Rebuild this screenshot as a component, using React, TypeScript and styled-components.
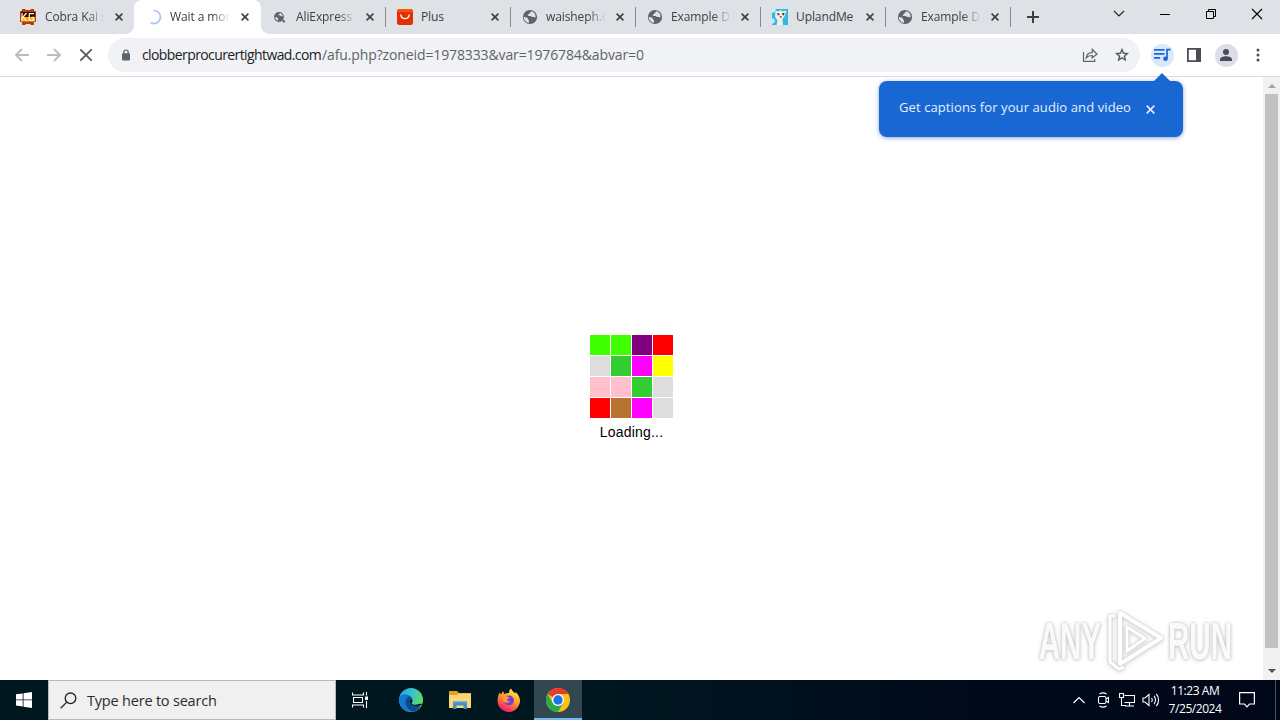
import type { ReactNode } from "react";
import styled, { createGlobalStyle, css } from "styled-components";

const GlobeIcon = () => (
  <svg width="16" height="16" viewBox="0 0 16 16">
    <circle cx="8" cy="8" r="7.1" fill="#5f6368" />
    <path d="M1.800 7.600c.8.900 2.300.6 3.400 1.200.9.500.5 1.300 1.200 1.900.8.700.7 1.700.4 3.300C4 13.500 1.600 11 1.800 7.600z" fill="#dee1e6" />
    <path d="M9.300 2.300c-.2 1-.9 1.200-1.600 1.500-.6.400 0 1.200-.8 1.500-1 .2-1.400.7-.9 1.400.7.500 2.300-.2 3 .6.500.7 1.300 1 2.300.7.900-.2 1.500.1 2.300.6C14 5.500 12.200 2.900 9.300 2.300z" fill="#dee1e6" />
  </svg>
);

const SmallGlobeIcon = () => (
  <svg width="16" height="16" viewBox="0 0 16 16">
    <circle cx="7" cy="8" r="4.900" fill="#5f6368" />
    <path d="M3.200 8c1.200.2 2 .3 2.500 1 .3.700.8 1.300.4 2.500C4.500 11.300 3 10 3.200 8zM8 4.300c-.5.800-1.500.9-1.700 1.600.5.700 1.900 0 2.400 1 .7.300 1.400.1 2 .3C10.600 5.800 9.500 4.500 8 4.300z" fill="#dee1e6" />
    <circle cx="11.800" cy="12.300" r="1.200" fill="#5f6368" />
  </svg>
);

const CobraIcon = () => (
  <svg width="16" height="16" viewBox="0 0 16 16">
    <path d="M2 0h3l1 1h4l1-1h3v2h2v11h-2v3h-3l-1-1H6l-1 1H2v-3H0V2h2z" fill="#b83a10" />
    <path d="M1 8h14v4.500H1z" fill="#f6a81c" />
    <path d="M1 3h14v5H1z" fill="#2b0604" />
    <path d="M2 4v8M6.500 4 3 8l3.700 4M14 4.700H9.300v6.600h4.200V8.500h-2" fill="none" stroke="#fff4b0" strokeWidth="1.300" />
  </svg>
);

const AliIcon = () => (
  <svg width="16" height="16" viewBox="0 0 16 16">
    <rect width="16" height="16" rx="2.500" fill="#e62e04" />
    <path d="M0 3V2.500A2.500 2.500 0 0 1 2.500 0h11A2.500 2.500 0 0 1 16 2.500V3z" fill="#f0550a" />
    <path d="M3.800 5.800c.8 5 7.600 5 8.400 0" fill="none" stroke="#fff" strokeWidth="1.300" strokeLinecap="round" />
  </svg>
);

const UplandIcon = () => (
  <svg width="16" height="16" viewBox="0 0 16 16">
    <rect width="16" height="16" fill="#35b5e8" />
    <path d="M3.500 1.500l3 1 2-1.500 2 1.500 4-1-2 6-2 2.500.5 6H4.500l1-4.500-2.500-4z" fill="#f2efe8" />
    <path d="M5 4l2.500.5V6L6 6.500zM10 4h2.500l-.5 2.500-1.500-.5z" fill="#4a3a30" />
    <path d="M7.500 7h2.500L9 9.500z" fill="#8c5a3a" />
    <path d="M0 0h4l-1 3-3 1zM0 10l2-1 1 4-3 2z" fill="#c6ecf7" />
  </svg>
);

const SpinnerIcon = () => (
  <svg width="16" height="16" viewBox="0 0 16 16">
    <path d="M7.500 1.500a6.500 6.500 0 1 1-3 12" fill="none" stroke="#a9c4f5" strokeWidth="1.700" />
  </svg>
);

const CloseIcon = ({ color = "#3c4043", size = 8, stroke = 1.6 }) => (
  <svg width={size} height={size} viewBox="0 0 8 8">
    <path d="M.6.6l6.800 6.800M7.400.6L.6 7.400" stroke={color} strokeWidth={stroke} />
  </svg>
);

type TabType = {
  title: string;
  icon: ReactNode;
  active?: boolean;
  separator?: boolean;
  fade?: boolean;
};

const tabs: TabType[] = [
  { title: "Cobra Kai s", icon: <CobraIcon />, fade: true },
  { title: "Wait a mor", icon: <SpinnerIcon />, active: true, fade: true },
  { title: "AliExpress", icon: <SmallGlobeIcon />, separator: true, fade: true },
  { title: "Plus", icon: <AliIcon />, separator: true },
  { title: "waisheph.c", icon: <GlobeIcon />, separator: true, fade: true },
  { title: "Example D", icon: <GlobeIcon />, separator: true, fade: true },
  { title: "UplandMe", icon: <UplandIcon />, separator: true },
  { title: "Example D", icon: <GlobeIcon />, separator: true, fade: true },
];

const blocks = [
  "#40ff00", "#40ff00", "#800080", "#ff0000",
  "#dddddd", "#32cd32", "#ff00ff", "#ffff00",
  "#ffc0cb", "#ffc0cb", "#32cd32", "#dddddd",
  "#ff0000", "#b87333", "#ff00ff", "#dddddd",
];

const TabStrip = () => (
  <Strip>
    {tabs.map((tab, index) => (
      <Tab key={index} $active={tab.active} $separator={tab.separator}>
        <Favicon>{tab.icon}</Favicon>
        <TabTitle $fade={tab.fade}>{tab.title}</TabTitle>
        <CloseIcon />
      </Tab>
    ))}
    <NewTab>
      <svg width="12" height="12" viewBox="0 0 12 12">
        <path d="M6 0v12M0 6h12" stroke="#3c4043" strokeWidth="2" />
      </svg>
    </NewTab>
    <WindowButtons>
      <svg width="12" height="8" viewBox="0 0 12 8">
        <path d="M1 1l5 5 5-5" fill="none" stroke="#222" strokeWidth="1.200" />
      </svg>
      <svg width="12" height="12" viewBox="0 0 12 12">
        <path d="M1 6.500h10" stroke="#000" />
      </svg>
      <svg width="12" height="12" viewBox="0 0 12 12">
        <path d="M1.500 3.500h7v7h-7zM3.500 3.500v-2h7v7h-2" fill="none" stroke="#000" />
      </svg>
      <svg width="12" height="12" viewBox="0 0 12 12">
        <path d="M1 1l10 10M11 1L1 11" stroke="#000" strokeWidth="1.100" />
      </svg>
    </WindowButtons>
  </Strip>
);

const Toolbar = () => (
  <Bar>
    <NavButtons>
      <svg width="16" height="16" viewBox="0 0 16 16" fill="none" stroke="#b9bbbe" strokeWidth="1.800">
        <path d="M15 8H2.500M8 2L2 8l6 6" />
      </svg>
      <svg width="16" height="16" viewBox="0 0 16 16" fill="none" stroke="#b9bbbe" strokeWidth="1.800">
        <path d="M1 8h12.500M8 2l6 6-6 6" />
      </svg>
      <svg width="16" height="16" viewBox="0 0 16 16" fill="none" stroke="#55585c" strokeWidth="1.800">
        <path d="M2.300 2.300l11.400 11.400M13.700 2.300L2.300 13.700" />
      </svg>
    </NavButtons>
    <Omnibox>
      <svg width="10" height="12" viewBox="0 0 10 12">
        <rect x="1" y="4.300" width="8" height="7.200" rx="1" fill="#5f6368" />
        <path d="M2.800 5V3.200a2.200 2.200 0 0 1 4.400 0V5" fill="none" stroke="#5f6368" strokeWidth="1.200" />
      </svg>
      <Url>
        <Domain>clobberprocurertightwad.com</Domain>
        <Path>/afu.php?zoneid=1978333&amp;var=1976784&amp;abvar=0</Path>
      </Url>
      <svg width="16" height="16" viewBox="0 0 16 16" fill="none" stroke="#5f6368" strokeWidth="1.200">
        <path d="M1.500 5v9.400h11.300V12" />
        <path d="M4.200 11c.3-3.500 2.500-5.300 6-5.400V2.500L15 7l-4.800 4V8.500c-2.600 0-4.500.6-6 2.500z" />
      </svg>
      <svg width="16" height="16" viewBox="0 0 24 24">
        <path
          d="M22 9.240l-7.190-.62L12 2 9.190 8.630 2 9.240l5.460 4.730L5.820 21 12 17.270 18.180 21l-1.630-7.030L22 9.240zM12 15.400l-3.760 2.270 1-4.280-3.320-2.880 4.380-.38L12 6.100l1.710 4.040 4.380.38-3.320 2.880 1 4.280L12 15.400z"
          fill="#4a4d51"
          stroke="#4a4d51"
          strokeWidth=".4"
        />
      </svg>
    </Omnibox>
    <Actions>
      <RoundButton $color="#d9e8fc">
        <svg width="18" height="18" viewBox="0 0 18 18" fill="none" stroke="#1967d2" strokeWidth="1.700">
          <path d="M1 3.800h10.500M1 7.800h10.500M1 11.800h6M14 13V3.600h3.500" />
          <circle cx="12.500" cy="12.800" r="2.300" fill="#1967d2" stroke="none" />
        </svg>
      </RoundButton>
      <svg width="14" height="14" viewBox="0 0 14 14">
        <path d="M.9.900h12.200v12.200H.9z" fill="none" stroke="#4a4d51" strokeWidth="1.800" />
        <path d="M9 1h4v12H9z" fill="#4a4d51" />
      </svg>
      <RoundButton $color="#dcdde6">
        <svg width="14" height="14" viewBox="0 0 14 14" fill="#484b58">
          <circle cx="7" cy="4" r="3" />
          <path d="M1 13v-1.500C1 9.300 4.500 8.300 7 8.300s6 1 6 3.200V13z" />
        </svg>
      </RoundButton>
      <svg width="4" height="14" viewBox="0 0 4 14" fill="#4a4d51">
        <circle cx="2" cy="2" r="1.500" />
        <circle cx="2" cy="7" r="1.500" />
        <circle cx="2" cy="12" r="1.500" />
      </svg>
    </Actions>
    <Bubble>
      <BubbleText>Get captions for your audio and video</BubbleText>
      <CloseIcon color="#e8f0fe" size={9} stroke={1.4} />
    </Bubble>
  </Bar>
);

const Watermark = () => (
  <Mark>
    <MarkText>ANY</MarkText>
    <MarkLogo width="58" height="64" viewBox="0 0 58 64" fill="none" stroke="#fff" strokeLinejoin="round">
      <path d="M9 7H4v46l9 7 5-2" strokeWidth="3" />
      <path d="M14 4l41 25-41 26V4z" strokeWidth="4" />
      <path d="M21 18v24l18-12.500z" strokeWidth="3" />
    </MarkLogo>
    <MarkText>RUN</MarkText>
  </Mark>
);

const Taskbar = () => (
  <TaskbarLayout>
    <TaskButton>
      <svg width="16" height="16" viewBox="0 0 16 16" fill="#fff">
        <path d="M0 2.300l6.700-.9v6.100H0zM7.500 1.300L16 0v7.500H7.500zM0 8.300h6.700v6.200L0 13.600zM7.500 8.300H16V16l-8.500-1.300z" />
      </svg>
    </TaskButton>
    <SearchBox>
      <svg width="17" height="17" viewBox="0 0 17 17" fill="none" stroke="#222" strokeWidth="1.300">
        <circle cx="10.500" cy="6.300" r="5.300" />
        <path d="M6.700 10.100L.7 16.200" />
      </svg>
      <span>Type here to search</span>
    </SearchBox>
    <TaskButton>
      <svg width="17" height="16" viewBox="0 0 17 16" fill="none" stroke="#fff" strokeWidth="1.100">
        <path d="M.5.500v2.500h11V.500M.5 15.500V13h11v2.500M1.500 5.500h9v5h-9zM14.500 0v3.500M14.500 9v7" />
        <path d="M13 4.500h3V8h-3z" fill="#fff" stroke="none" />
      </svg>
    </TaskButton>
    <Apps>
      <TaskButton>
        <svg width="24" height="24" viewBox="0 0 24 24">
          <defs>
            <linearGradient id="edgeTop" x1="0" y1="0" x2="1" y2=".4">
              <stop offset="0" stopColor="#289fe0" />
              <stop offset=".5" stopColor="#35bfd6" />
              <stop offset="1" stopColor="#5fdb63" />
            </linearGradient>
          </defs>
          <circle cx="12" cy="12" r="12" fill="url(#edgeTop)" />
          <path d="M.1 10.500C1.500 6.500 6 5.500 9.500 7c3 1.200 4 3 4 5.300-2-1.700-3.300.200-2.500 2.300 1.200 3 6 4.400 10.800 2.500C19.500 21.500 16 24 12 24 5 24-.3 18 .1 10.500z" fill="#1478d0" />
          <path d="M9.500 8.500C6 10.500 5.500 16 8 19c1.800 2.600 4.300 4.400 6.500 4.800 3-.7 5.800-2.700 7.300-6.700-4.800 1.900-9.600.500-10.800-2.500-.8-2.100.5-4 2.500-2.300 0-1.800-1.600-3.300-4-3.800z" fill="#114a8b" />
          <path d="M13.500 12.300c.3 1-.8 1.800-.8 2.700 0 1.800 4.300 2.700 7.800.7l4 .3-2.700 1.100c-4.800 1.900-9.600.5-10.800-2.500-.8-2.100.5-4 2.500-2.300z" fill="#001721" />
        </svg>
      </TaskButton>
      <TaskButton>
        <svg width="22" height="18" viewBox="0 0 22 18">
          <path d="M0 0h8l2 2h12v15H0z" fill="#e5a02b" />
          <path d="M0 4h8l2-1.500h12V17H0z" fill="#fcd770" />
          <path d="M4 18v-8h14v8h-3.500v-3.500h-7V18z" fill="#3e92cc" />
          <path d="M4 10h14v1.500H4z" fill="#6db5e0" />
        </svg>
      </TaskButton>
      <TaskButton>
        <svg width="24" height="24" viewBox="0 0 24 24">
          <defs>
            <linearGradient id="fox" x1=".8" y1="0" x2=".3" y2="1">
              <stop offset="0" stopColor="#fff14f" />
              <stop offset=".45" stopColor="#ffa02a" />
              <stop offset=".8" stopColor="#ff4056" />
              <stop offset="1" stopColor="#e31587" />
            </linearGradient>
          </defs>
          <path d="M2.500 4.500L4 6.500 6 3l1.200 3c2-1 3-1 5-1-.500-2 .5-3.500 2-4.500.5 2.300 2.500 3.300 4 5l.500-1.500c4 4 5.500 8.500 3.300 13C20 21.500 16 24 12 24 5.500 24 .5 19 .5 12.500c0-3 1-5.500 2-8z" fill="url(#fox)" />
          <circle cx="12" cy="12.500" r="5" fill="#7540cf" />
          <path d="M5 8c2.500-1.200 4.500-.5 6 1l1.500.5c-.5 1.300-2 1.200-2.500 2.200.3 1.500 1.500 1.800 3.500 1.300-1.500 2.500-6 2.300-7.500-.5z" fill="#ff9a30" />
        </svg>
      </TaskButton>
      <TaskButton $open>
        <svg width="24" height="24" viewBox="0 0 24 24">
          <circle cx="12" cy="12" r="12" fill="#fbc116" />
          <path d="M12 12L1.600 6A12 12 0 0 1 22.400 6H12z" fill="#e33b2e" />
          <path d="M1.600 6A12 12 0 0 0 12 24l5.200-9H6.800z" fill="#2da94f" />
          <circle cx="12" cy="12" r="6" fill="#fff" />
          <circle cx="12" cy="12" r="4.700" fill="#1a73e8" />
        </svg>
      </TaskButton>
    </Apps>
    <Tray>
      <svg width="14" height="8" viewBox="0 0 14 8" fill="none" stroke="#fff" strokeWidth="1.200">
        <path d="M1.500 7L7 1.500 12.500 7" />
      </svg>
      <svg width="12" height="16" viewBox="0 0 12 16" fill="none" stroke="#fff" strokeWidth="1.100">
        <rect x="1.500" y="4.500" width="7.500" height="7" rx="1.500" />
        <path d="M9 7l2.500-1.500v5L9 9M2.500 2c2-1.300 5-1.300 7 0M2.500 14c2 1.300 5 1.300 7 0" />
      </svg>
      <svg width="16" height="14" viewBox="0 0 16 14" fill="none" stroke="#fff" strokeWidth="1.100">
        <path d="M5.500 2.500h10v7h-10M10.500 9.500v3M6 13h9M.5.500h4v4h-4zM2.500 4.500v8H7" />
      </svg>
      <svg width="18" height="14" viewBox="0 0 18 14" fill="none" stroke="#fff" strokeWidth="1.100">
        <path d="M1 5h2l4-3.500v11L3 9H1zM9.500 5c1 1 1 3 0 4M12 3c2 2 2 6 0 8M14.300 1c3 3 3 9 0 12" />
      </svg>
    </Tray>
    <Clock>
      <div>11:23 AM</div>
      <div>7/25/2024</div>
    </Clock>
    <Notification>
      <svg width="16" height="16" viewBox="0 0 16 16" fill="none" stroke="#fff" strokeWidth="1.200">
        <path d="M.6.600h14.800v11.400H10.500L8 14.800 5.500 12H.6z" />
      </svg>
    </Notification>
  </TaskbarLayout>
);

const App = () => {
  return (
    <>
      <GlobalStyle />
      <Screen>
        <TabStrip />
        <Toolbar />
        <Content>
          <Page>
            <Loader>
              <BlockGrid>
                {blocks.map((color, index) => (
                  <Block key={index} $color={color} />
                ))}
              </BlockGrid>
              <LoadingText>Loading...</LoadingText>
            </Loader>
            <Watermark />
          </Page>
          <Scrollbar>
            <Arrow $up />
            <Thumb />
            <Arrow />
          </Scrollbar>
        </Content>
        <Taskbar />
      </Screen>
    </>
  );
};

const GlobalStyle = createGlobalStyle`
  * {
    box-sizing: border-box;
  }
  body {
    margin: 0;
    overflow: hidden;
    font-family: "Open Sans", "Noto Sans", sans-serif;
  }
  svg {
    display: block;
    flex-shrink: 0;
  }
`;

const Screen = styled.div`
  display: flex;
  flex-direction: column;
  width: 1280px;
  height: 720px;
  background-color: #fff;
`;

const Strip = styled.div`
  display: flex;
  height: 34px;
  padding-left: 11px;
  background-color: #dee1e6;
`;

const Tab = styled.div<{ $active?: boolean; $separator?: boolean }>`
  position: relative;
  display: flex;
  align-items: center;
  width: ${({ $active }) => ($active ? "126px" : "125px")};
  height: 34px;
  padding: 0 13px 0 10px;

  ${({ $separator }) =>
    $separator &&
    css`
      &::after {
        content: "";
        position: absolute;
        right: 1px;
        top: 7px;
        width: 1px;
        height: 20px;
        background-color: #85888d;
      }
    `}

  ${({ $active }) =>
    $active &&
    css`
      z-index: 1;
      &::before {
        content: "";
        position: absolute;
        z-index: -1;
        inset: 0 1px 0 -2px;
        border-radius: 8px 8px 0 0;
        background-color: #fff;
      }
      &::after {
        content: "";
        position: absolute;
        z-index: -1;
        bottom: 0;
        left: -10px;
        right: -7px;
        height: 8px;
        background:
          radial-gradient(circle at 0 0, transparent 7.5px, #fff 8px) left / 8px 8px no-repeat,
          radial-gradient(circle at 100% 0, transparent 7.5px, #fff 8px) right / 8px 8px no-repeat;
      }
    `}
`;

const Favicon = styled.div`
  flex-shrink: 0;
  width: 16px;
  height: 16px;

  ${Tab}:first-child & {
    margin: 0 1px 0 -1px;
  }
`;

const TabTitle = styled.span<{ $fade?: boolean }>`
  flex: 1;
  min-width: 0;
  margin: 0 3px 0 8px;
  white-space: nowrap;
  font-size: 12px;
  line-height: 18px;
  letter-spacing: -0.1px;
  color: #3c4043;
  ${({ $fade }) =>
    $fade && "mask-image: linear-gradient(90deg, #000 42px, transparent 60px);"}
`;

const NewTab = styled.div`
  display: flex;
  align-items: center;
  margin-left: 15px;
`;

const WindowButtons = styled.div`
  display: flex;
  align-items: center;
  gap: 34px;
  height: 28px;
  margin: 0 17px 0 auto;
`;

const Bar = styled.div`
  position: relative;
  display: flex;
  align-items: center;
  height: 43px;
  padding-left: 14px;
  border-bottom: 1px solid #d9dbde;
`;

const NavButtons = styled.div`
  display: flex;
  gap: 16px;
  width: 94px;
`;

const Omnibox = styled.div`
  display: flex;
  flex-shrink: 0;
  align-items: center;
  gap: 16px;
  width: 1032px;
  height: 34px;
  padding: 0 10px 0 13px;
  border-radius: 17px;
  background-color: #f0f2f5;
`;

const Url = styled.div`
  display: flex;
  flex: 1;
  margin: 0 0 1px -5px;
  font-size: 14px;
`;

const Domain = styled.span`
  width: 180px;
  color: #202124;
  letter-spacing: -0.6px;
`;

const Path = styled.span`
  color: #5f6368;
  letter-spacing: -0.12px;
`;

const Actions = styled.div`
  display: grid;
  grid-template-columns: repeat(4, 32px);
  align-items: center;
  justify-items: center;
  margin-left: 6px;
`;

const RoundButton = styled.div<{ $color: string }>`
  display: flex;
  align-items: center;
  justify-content: center;
  width: 23px;
  height: 23px;
  border-radius: 50%;
  background-color: ${({ $color }) => $color};
`;

const Bubble = styled.div`
  position: absolute;
  z-index: 2;
  top: 47px;
  left: 879px;
  display: flex;
  align-items: center;
  width: 304px;
  height: 56px;
  padding: 0 28px 0 20px;
  border-radius: 8px;
  background-color: #1967d2;
  box-shadow: 0 1px 4px rgba(25, 80, 160, 0.5);

  &::before {
    content: "";
    position: absolute;
    top: -8px;
    left: 274px;
    border: 9px solid transparent;
    border-top: 0;
    border-bottom: 9px solid #1967d2;
  }
`;

const BubbleText = styled.span`
  flex: 1;
  margin-top: -4px;
  white-space: nowrap;
  font-size: 13px;
  letter-spacing: 0.1px;
  color: #e8f0fe;
`;

const Content = styled.div`
  display: flex;
  height: 603px;
`;

const Page = styled.div`
  position: relative;
  display: flex;
  justify-content: center;
  width: 1263px;
  padding-top: 258px;
`;

const Loader = styled.div`
  display: flex;
  flex-direction: column;
  align-items: center;
`;

const BlockGrid = styled.div`
  display: grid;
  grid-template-columns: repeat(4, 20px);
  gap: 1px;
`;

const Block = styled.div<{ $color: string }>`
  height: 20px;
  background-color: ${({ $color }) => $color};
`;

const LoadingText = styled.p`
  margin: 6px 0 0;
  font-family: "Liberation Sans", Arial, sans-serif;
  font-size: 14px;
  line-height: 16px;
  letter-spacing: 0.2px;
  color: #000;
`;

const Mark = styled.div`
  position: absolute;
  top: 532px;
  left: 1038px;
  display: flex;
  align-items: center;
  justify-content: space-between;
  width: 194px;
  height: 64px;
`;

const MarkText = styled.span`
  display: flex;
  justify-content: center;
  width: 64px;
  font-family: "Liberation Sans", Arial, sans-serif;
  font-size: 52px;
  font-weight: 700;
  line-height: 64px;
  color: #fafafa;
  transform: scaleX(0.57);
  text-shadow: 0 0 4px #c4c4c4, 0 1px 6px #ccc;
`;

const MarkLogo = styled.svg`
  filter: drop-shadow(0 0 1px #c6c6c6) drop-shadow(0 1px 2px #d2d2d2);
`;

const Scrollbar = styled.div`
  display: flex;
  flex-direction: column;
  align-items: center;
  width: 17px;
  background-color: #f1f1f1;
`;

const Arrow = styled.div<{ $up?: boolean }>`
  display: flex;
  align-items: center;
  justify-content: center;
  height: 17px;
  margin-top: ${({ $up }) => ($up ? 0 : "14px")};

  &::before {
    content: "";
    border: 4px solid transparent;
    ${({ $up }) =>
      $up
        ? "border-top: 0; border-bottom-color: #a3a3a3;"
        : "border-bottom: 0; border-top-color: #505050;"}
  }
`;

const Thumb = styled.div`
  width: 13px;
  height: 554px;
  background-color: #c1c1c1;
`;

const TaskbarLayout = styled.div`
  display: flex;
  height: 40px;
  background: linear-gradient(90deg, #001720 0%, #001720 45%, #000a1a 75%, #000719 100%);
`;

const TaskButton = styled.div<{ $open?: boolean }>`
  display: flex;
  align-items: center;
  justify-content: center;
  width: 48px;
  height: 40px;
  ${({ $open }) =>
    $open &&
    css`
      background-color: #334750;
      border-bottom: 2px solid #76b9ed;
      padding-top: 2px;
    `}
`;

const Apps = styled.div`
  display: flex;
  gap: 1px;
  margin-left: 3px;
`;

const SearchBox = styled.div`
  display: flex;
  align-items: center;
  gap: 10px;
  width: 288px;
  height: 40px;
  padding-left: 11px;
  border: 1px solid #b8b8b8;
  background-color: #f0f0f0;
  font-size: 14.5px;
  letter-spacing: -0.2px;
  color: #2b2b2b;
`;

const Tray = styled.div`
  display: grid;
  grid-template-columns: repeat(4, 24px);
  align-items: center;
  justify-items: center;
  margin-left: auto;
`;

const Clock = styled.div`
  width: 64px;
  padding-top: 2px;
  font-size: 12px;
  line-height: 18px;
  letter-spacing: -0.45px;
  text-align: center;
  color: #fff;
`;

const Notification = styled.div`
  display: flex;
  align-items: center;
  width: 49px;
  padding-left: 12px;
  margin-right: 4px;
  border-right: 1px solid #4b5360;
`;

export default App;
